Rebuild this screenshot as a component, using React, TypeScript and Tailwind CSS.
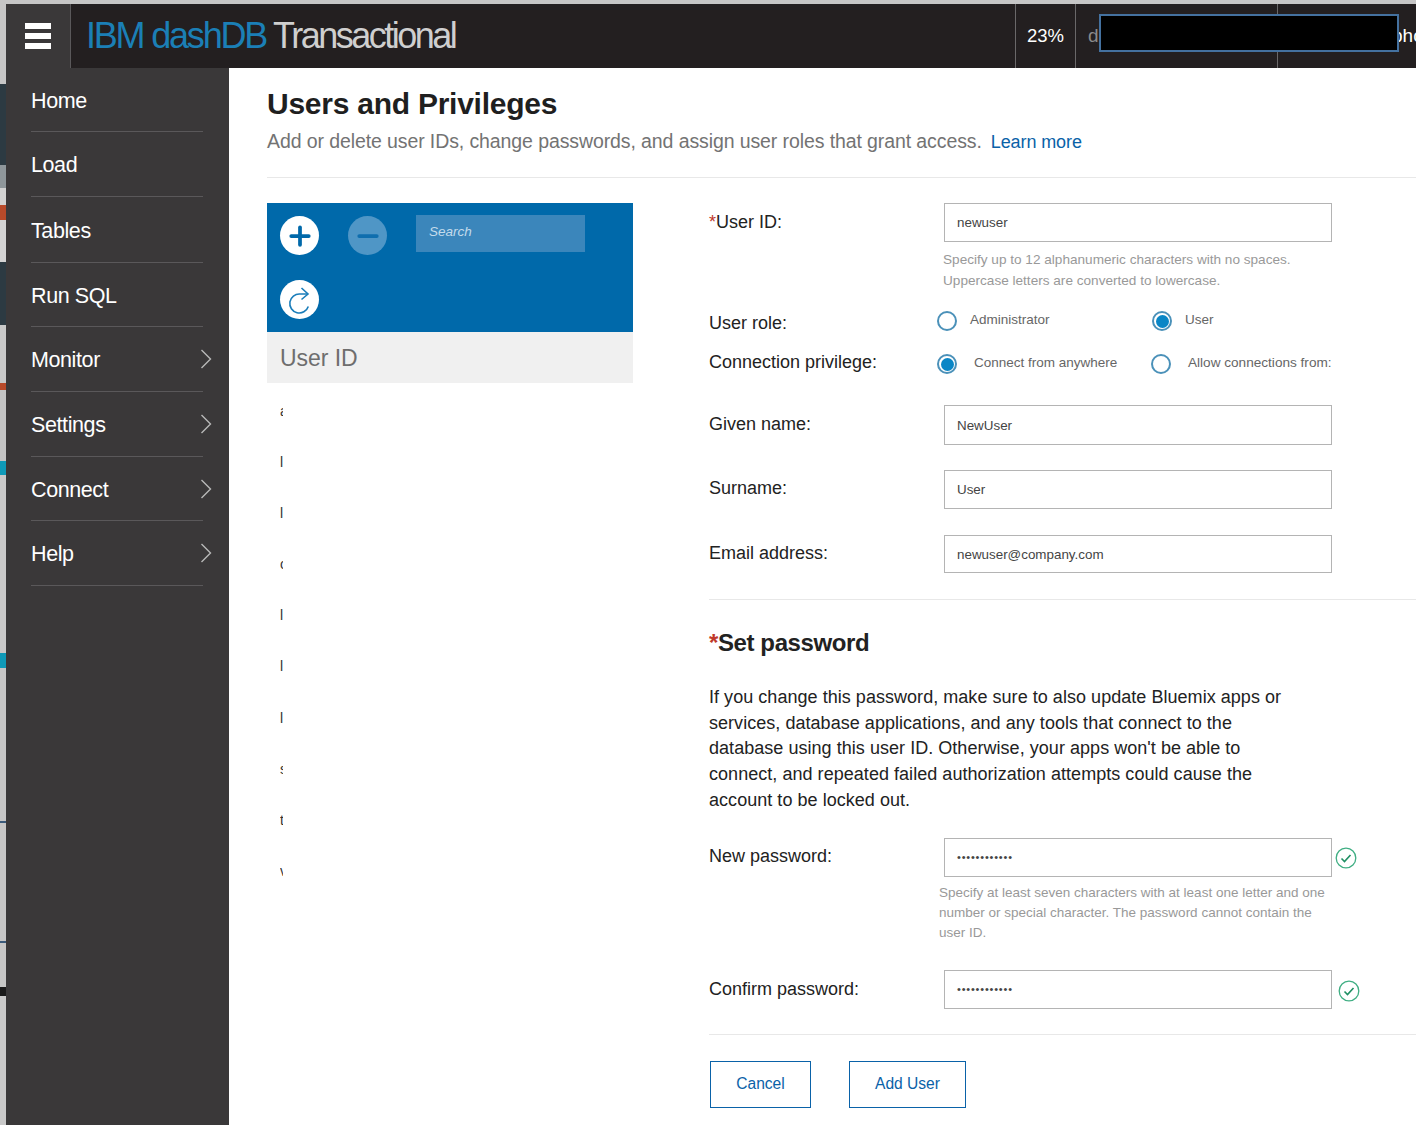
import { ReactNode } from "react";
import { Minus, Plus } from "lucide-react";

const navItems = [
  { label: "Home", h: "h-[64px]" },
  { label: "Load", h: "h-[65px]" },
  { label: "Tables", h: "h-[66px]" },
  { label: "Run SQL", h: "h-[64px]" },
  { label: "Monitor", h: "h-[65px]", arrow: true },
  { label: "Settings", h: "h-[65px]", arrow: true },
  { label: "Connect", h: "h-[64px]", arrow: true },
  { label: "Help", h: "h-[65px]", arrow: true },
];

const userRows = ["a", "l", "l", "c", "l", "l", "l", "s", "t", "v"];

// bits of the window behind, seen down the left edge
const stripBits = [
  { h: "h-[84px]", c: "bg-[#c6c6c6]" },
  { h: "h-[81px]", c: "bg-[#2c3a42]" },
  { h: "h-[23px]", c: "bg-[#8f979b]" },
  { h: "h-[17px]", c: "bg-[#d2d2d2]" },
  { h: "h-[15px]", c: "bg-[#b84a2a]" },
  { h: "h-[42px]", c: "bg-[#d4d4d4]" },
  { h: "h-[63px]", c: "bg-[#2c3a42]" },
  { h: "h-[58px]", c: "bg-[#c9c9c9]" },
  { h: "h-[7px]", c: "bg-[#b84a2a]" },
  { h: "h-[71px]", c: "bg-[#c4c4c4]" },
  { h: "h-[14px]", c: "bg-[#0f9ab8]" },
  { h: "h-[178px]", c: "bg-[#c9c9c9]" },
  { h: "h-[15px]", c: "bg-[#0f9ab8]" },
  { h: "h-[153px]", c: "bg-[#c6c6c6]" },
  { h: "h-[2px]", c: "bg-[#3b5a7a]" },
  { h: "h-[118px]", c: "bg-[#c6c6c6]" },
  { h: "h-[2px]", c: "bg-[#3b5a7a]" },
  { h: "h-[44px]", c: "bg-[#c6c6c6]" },
  { h: "h-[9px]", c: "bg-[#1a1a1a]" },
  { h: "h-[129px]", c: "bg-[#c9c9c9]" },
];

const Field = ({
  label,
  boxClass,
  labelClass,
  children,
}: {
  label: ReactNode;
  boxClass: string;
  labelClass: string;
  children: ReactNode;
}) => (
  <div className="flex items-start">
    <label className={`w-[235px] shrink-0 text-[18px] leading-[22px] text-[#222] ${labelClass}`}>{label}</label>
    <div className={`w-[388px] border border-[#b4b4b4] pl-[12px] flex items-center text-[#444] ${boxClass}`}>
      {children}
    </div>
  </div>
);

const Radio = ({ checked }: { checked?: boolean }) => (
  <span className="w-[20px] h-[20px] mt-[1px] rounded-full border-2 border-[#4b91b9] flex items-center justify-center shrink-0">
    {checked && <span className="w-[13px] h-[13px] rounded-full bg-[#0a86c6]" />}
  </span>
);

const CheckMark = ({ className }: { className: string }) => (
  <svg viewBox="0 0 22 22" className={`w-[22px] h-[22px] shrink-0 ${className}`} fill="none">
    <circle cx="11" cy="11" r="9.8" stroke="#3fae83" strokeWidth="1.3" />
    <path d="M6.5 11.5l3 3 6-6.5" stroke="#1f8f63" strokeWidth="1.6" />
  </svg>
);

const App = () => {
  return (
    <div className="w-[1416px] h-[1125px] overflow-hidden flex bg-white font-['Liberation_Sans',Arial,sans-serif] relative">
      <div className="w-[6px] shrink-0 flex flex-col">
        {stripBits.map((b, i) => (
          <div key={i} className={`${b.h} ${b.c}`} />
        ))}
      </div>

      <div className="flex-1 flex flex-col min-w-0">
        <div className="h-[4px] shrink-0 bg-[#c6c6c6]" />

        <header className="h-[64px] shrink-0 flex bg-[#231f20]">
          <div className="w-[65px] bg-[#3a3839] border-r border-[#5a585a] flex items-center pl-[19px]">
            <div className="w-[26px] flex flex-col gap-[4px]">
              <span className="h-[6px] bg-white" />
              <span className="h-[6px] bg-white" />
              <span className="h-[6px] bg-white" />
            </div>
          </div>
          <div className="flex-1 pl-[15px] flex items-center text-[36px] font-light tracking-[-2.2px] text-[#1b7fb6] whitespace-nowrap">
            IBM dashDB<span className="text-[#cfcfcf] ml-[7px] tracking-[-2.5px]">Transactional</span>
          </div>
          <div className="w-[60px] border-l border-[#6a6869] flex items-center justify-center text-[18.5px] text-white">
            23%
          </div>
          <div className="w-[202px] border-l border-[#6a6869] pl-[12px] flex items-center text-[19px] text-[#8a8a8a]">
            d
          </div>
          <div className="w-[139px] border-l border-[#6a6869] pl-[114px] flex items-center text-[19px] text-white overflow-hidden whitespace-nowrap">
            pho
          </div>
        </header>

        <div className="flex-1 flex min-h-0">
          <nav className="w-[223px] shrink-0 bg-[#3a3839]">
            {navItems.map((item) => (
              <div
                key={item.label}
                className={`${item.h} ml-[25px] relative flex items-center pt-[3px] border-b border-[#5a585a] w-[172px] text-[21.5px] tracking-[-0.4px] text-white`}
              >
                {item.label}
                {item.arrow && (
                  <svg viewBox="0 0 12 20" fill="none" stroke="#b8b8b8" strokeWidth="1.4" className="absolute -right-[9px] top-[22px] w-[12px] h-[20px]">
                    <path d="M1.5 1l9 9-9 9" />
                  </svg>
                )}
              </div>
            ))}
          </nav>

          <main className="flex-1 min-w-0 pl-[38px] overflow-hidden">
            <div className="h-[110px] border-b border-[#e8e8e8]">
              <h1 className="pt-[17px] text-[30px] leading-[38px] font-bold tracking-[-0.25px] text-[#1f1f1f] whitespace-nowrap">
                Users and Privileges
              </h1>
              <p className="mt-[5px] text-[19.5px] leading-[26px] tracking-[-0.1px] text-[#737373] whitespace-nowrap">
                Add or delete user IDs, change passwords, and assign user roles that grant access.
                <a className="ml-[9px] text-[18px] text-[#0a62a8]">Learn more</a>
              </p>
            </div>

            <div className="flex pt-[25px]">
              <section className="w-[366px] shrink-0">
                <div className="h-[129px] bg-[#0069aa]">
                  <div className="flex items-start pt-[13px] pl-[13px]">
                    <span className="w-[39px] h-[39px] rounded-full bg-white flex items-center justify-center">
                      <Plus size={30} strokeWidth={3} className="text-[#0069aa]" />
                    </span>
                    <span className="ml-[29px] w-[39px] h-[39px] rounded-full bg-[#4f96c6] flex items-center justify-center">
                      <Minus size={30} strokeWidth={3} className="text-[#0f6eae]" />
                    </span>
                    <div className="ml-[29px] -mt-[1px] w-[169px] h-[37px] bg-[#3b86bb] pl-[13px] pb-[2px] flex items-center text-[13.5px] italic text-[#c3dbeb]">
                      Search
                    </div>
                  </div>
                  <div className="pl-[13px] mt-[25px]">
                    <span className="w-[39px] h-[39px] rounded-full bg-white block">
                      <svg viewBox="0 0 39 39" className="w-[39px] h-[39px]" fill="none" stroke="#1a7dba" strokeWidth="1.6">
                        <path d="M27 14H20A9.5 9.5 0 1 0 28.3 26.5" />
                        <path d="M21.5 8l6.5 6-6.5 5.5" />
                      </svg>
                    </span>
                  </div>
                </div>
                <div className="h-[51px] bg-[#f0f0f0] pl-[13px] pt-[2px] flex items-center text-[23px] tracking-[-0.05px] text-[#6e6e6e]">
                  User ID
                </div>
                <ul className="pt-[19px] pl-[13px]">
                  {userRows.map((ch, i) => (
                    <li key={i} className="h-[51.1px] leading-[18px] text-[14px] text-[#333] w-[3px] overflow-hidden">
                      {ch}
                    </li>
                  ))}
                </ul>
              </section>

              <section className="flex-1 ml-[76px] min-w-0">
                <Field
                  label={<><span className="text-[#c0392b]">*</span>User ID:</>}
                  labelClass="pt-[8px]"
                  boxClass="h-[39px] pt-[2px] text-[13.4px]"
                >
                  newuser
                </Field>
                <p className="ml-[234px] mt-[7px] w-[400px] text-[13.6px] leading-[21px] text-[#999]">
                  Specify up to 12 alphanumeric characters with no spaces. Uppercase letters are converted to lowercase.
                </p>

                <div className="flex mt-[19px] h-[30px]">
                  <label className="w-[228px] pt-[2px] text-[18px] leading-[22px] text-[#222]">User role:</label>
                  <Radio />
                  <span className="ml-[13px] w-[182px] text-[13.5px] leading-[20px] text-[#666]">Administrator</span>
                  <Radio checked />
                  <span className="ml-[13px] text-[13.5px] leading-[20px] text-[#666]">User</span>
                </div>
                <div className="flex mt-[13px] h-[30px]">
                  <label className="w-[228px] -mt-[2px] text-[18px] leading-[22px] text-[#222]">Connection privilege:</label>
                  <Radio checked />
                  <span className="ml-[17px] w-[177px] text-[13.5px] leading-[20px] text-[#666] whitespace-nowrap">Connect from anywhere</span>
                  <Radio />
                  <span className="ml-[17px] text-[13.6px] leading-[20px] text-[#666] whitespace-nowrap">Allow connections from:</span>
                </div>

                <div className="mt-[22px]">
                  <Field label="Given name:" labelClass="pt-[8px]" boxClass="h-[40px] pt-[2px] text-[13.4px]">
                    NewUser
                  </Field>
                  <div className="mt-[25px]">
                    <Field label="Surname:" labelClass="pt-[7px]" boxClass="h-[39px] pt-[2px] text-[13.4px]">
                      User
                    </Field>
                  </div>
                  <div className="mt-[26px]">
                    <Field label="Email address:" labelClass="pt-[7px]" boxClass="h-[38px] pt-[2px] text-[13.4px]">
                      newuser@company.com
                    </Field>
                  </div>
                </div>

                <div className="mt-[26px] border-t border-[#e8e8e8] pt-[28px]">
                  <h2 className="text-[24px] leading-[30px] font-bold tracking-[-0.4px] text-[#222]">
                    <span className="text-[#c0392b]">*</span>Set password
                  </h2>
                  <p className="mt-[27px] w-[585px] text-[18px] leading-[25.7px] tracking-[0.04px] text-[#222]">
                    If you change this password, make sure to also update Bluemix apps or services, database applications, and any tools that connect to the database using this user ID. Otherwise, your apps won't be able to connect, and repeated failed authorization attempts could cause the account to be locked out.
                  </p>
                </div>

                <div className="flex mt-[24px] items-start">
                  <Field label="New password:" labelClass="pt-[7px]" boxClass="h-[39px] text-[11px] tracking-[0.8px]">
                    ••••••••••••
                  </Field>
                  <CheckMark className="ml-[3px] mt-[9px]" />
                </div>
                <p className="ml-[230px] mt-[6px] w-[395px] text-[13.5px] leading-[20px] text-[#999]">
                  Specify at least seven characters with at least one letter and one number or special character. The password cannot contain the user ID.
                </p>
                <div className="flex mt-[27px] items-start">
                  <Field label="Confirm password:" labelClass="pt-[8px]" boxClass="h-[39px] text-[11px] tracking-[0.8px]">
                    ••••••••••••
                  </Field>
                  <CheckMark className="ml-[6px] mt-[10px]" />
                </div>

                <div className="mt-[25px] border-t border-[#e8e8e8] pt-[26px] pl-[1px] flex gap-[38px]">
                  <button className="w-[101px] h-[47px] border border-[#0a62a8] text-[15.6px] text-[#0a62a8]">Cancel</button>
                  <button className="w-[117px] h-[47px] border border-[#0a62a8] text-[15.6px] text-[#0a62a8]">Add User</button>
                </div>
              </section>
            </div>
          </main>
        </div>
      </div>

      {/* redaction box sits over the header */}
      <div className="absolute left-[1099px] top-[14px] w-[300px] h-[38px] bg-black border-2 border-[#44719f]" />
    </div>
  );
};

export default App;
